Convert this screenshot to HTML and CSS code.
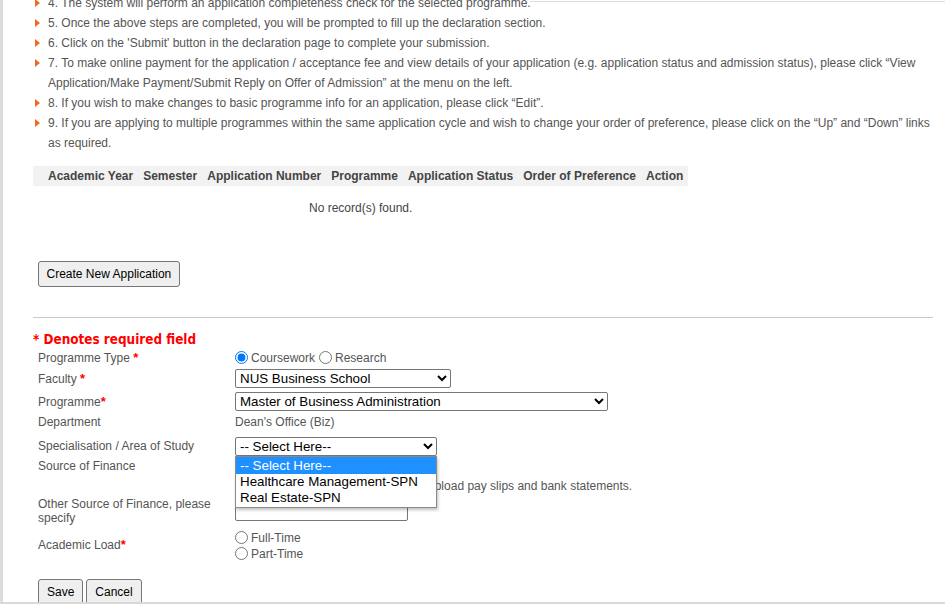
FILE: index.html
```html
<!DOCTYPE html>
<html lang="en">
<head>
<meta charset="utf-8">
<title>Application</title>
<link rel="stylesheet" href="styles.css">
</head>
<body>
<div class="frame">
  <div class="content">
    <ul class="steps">
      <li>4. The system will perform an application completeness check for the selected programme.</li>
      <li>5. Once the above steps are completed, you will be prompted to fill up the declaration section.</li>
      <li>6. Click on the 'Submit' button in the declaration page to complete your submission.</li>
      <li>7. To make online payment for the application / acceptance fee and view details of your application (e.g. application status and admission status), please click “View Application/Make Payment/Submit Reply on Offer of Admission” at the menu on the left.</li>
      <li>8. If you wish to make changes to basic programme info for an application, please click “Edit”.</li>
      <li>9. If you are applying to multiple programmes within the same application cycle and wish to change your order of preference, please click on the “Up” and “Down” links as required.</li>
    </ul>

    <table class="records">
      <thead>
        <tr>
          <th>Academic Year</th>
          <th>Semester</th>
          <th>Application Number</th>
          <th>Programme</th>
          <th>Application Status</th>
          <th>Order of Preference</th>
          <th>Action</th>
        </tr>
      </thead>
      <tbody>
        <tr><td colspan="7">No record(s) found.</td></tr>
      </tbody>
    </table>

    <div class="create-row">
      <button class="btn btn-create" type="button">Create New Application</button>
    </div>

    <div class="divider"></div>

    <div class="req-note">* Denotes required field</div>

    <form class="app-form">
      <div class="row r-type">
        <div class="lbl">Programme Type <span class="req">*</span></div>
        <div class="val"><input type="radio" name="ptype" class="rd" checked><span>Coursework</span><input type="radio" name="ptype" class="rd rd2"><span>Research</span></div>
      </div>
      <div class="row r-fac">
        <div class="lbl">Faculty <span class="req">*</span></div>
        <div class="val"><select class="sel w-fac"><option>NUS Business School</option></select></div>
      </div>
      <div class="row r-prog">
        <div class="lbl">Programme<span class="req">*</span></div>
        <div class="val"><select class="sel w-prog"><option>Master of Business Administration</option></select></div>
      </div>
      <div class="row r-dept">
        <div class="lbl">Department</div>
        <div class="val">Dean's Office (Biz)</div>
      </div>
      <div class="row r-spec">
        <div class="lbl">Specialisation / Area of Study</div>
        <div class="val">
          <div class="spec-wrap">
            <select class="sel w-spec"><option>-- Select Here--</option></select>
            <div class="listbox">
              <div class="opt hl">-- Select Here--</div>
              <div class="opt">Healthcare Management-SPN</div>
              <div class="opt">Real Estate-SPN</div>
            </div>
          </div>
        </div>
      </div>
      <div class="row r-fin">
        <div class="lbl lbl-top">Source of Finance</div>
        <div class="val">
          <div class="fin-line"><select class="sel w-fin"><option>-- Select Here--</option></select></div>
          <div class="fin-note">Please upload pay slips and bank statements.</div>
        </div>
      </div>
      <div class="row r-other">
        <div class="lbl lbl-wrap">Other Source of Finance, please specify</div>
        <div class="val"><input type="text" class="txt"></div>
      </div>
      <div class="row r-load">
        <div class="lbl">Academic Load<span class="req">*</span></div>
        <div class="val">
          <div class="radio-line"><input type="radio" name="load" class="rd"><span>Full-Time</span></div>
          <div class="radio-line"><input type="radio" name="load" class="rd"><span>Part-Time</span></div>
        </div>
      </div>
      <div class="actions">
        <button class="btn btn-sm" type="button">Save</button>
        <button class="btn btn-sm" type="button">Cancel</button>
      </div>
    </form>
  </div>
</div>
</body>
</html>
```

FILE: styles.css
```css
html, body {
  margin: 0;
  padding: 0;
  background: #fff;
}

body {
  font: 12px "Liberation Sans", Arial, sans-serif;
  color: #555;
}

.frame {
  position: relative;
  height: 602px;
  border-left: 3px solid #dcdcdc;
  border-bottom: 2px solid #d9d9d9;
  overflow: hidden;
}

.frame::before {
  content: "";
  position: absolute;
  top: 1px;
  left: 527px;
  right: 0;
  height: 1px;
  background: #dedede;
  z-index: 2;
}

.content {
  margin: -7px 0 0 30px;
  width: 900px;
}

/* instructions */
.steps {
  list-style: none;
  margin: 0;
  padding: 0;
  line-height: 20px;
}

.steps li {
  position: relative;
  padding-left: 15px;
}

.steps li::before {
  content: "";
  position: absolute;
  left: 2px;
  top: 6px;
  border-left: 5px solid #ef6a1e;
  border-top: 4px solid transparent;
  border-bottom: 4px solid transparent;
}

/* records table */
.records {
  border-collapse: collapse;
  margin-top: 13px;
}

.records th {
  background: #f2f2f2;
  color: #444;
  font-weight: bold;
  text-align: left;
  white-space: nowrap;
  padding: 0 5px;
  height: 20px;
  line-height: 20px;
}

.records th:first-child {
  padding-left: 15px;
}

.records td {
  text-align: center;
  color: #444;
  padding: 12px 0 0;
  line-height: 20px;
}

/* buttons */
.btn {
  font: 12px "Liberation Sans", Arial, sans-serif;
  color: #000;
  background: #efefef;
  border: 1px solid #767676;
  border-radius: 3px;
  padding: 0 8px;
  height: 26px;
  margin: 0;
}

.btn-create {
  padding: 0 7.5px;
}

.create-row {
  margin-top: 43px;
  padding-left: 5px;
}

.divider {
  margin-top: 30px;
  border-top: 1px solid #c9c9c9;
}

.req-note {
  margin-top: 14px;
  height: 16px;
  line-height: 16px;
  color: #f00;
  font: bold 13.4px "DejaVu Sans Condensed", "DejaVu Sans", sans-serif;
}

/* form */
.app-form {
  padding-left: 5px;
}

.row {
  display: flex;
  align-items: center;
}

.lbl {
  width: 197px;
  flex: none;
  color: #555;
}

.val {
  color: #555;
}

.req {
  color: #f00;
  font-size: 13px;
  font-weight: bold;
}

.r-type { height: 19px; }
.r-fac { height: 23px; }
.r-prog { height: 22px; }
.r-dept { height: 19px; }
.r-spec { height: 30px; }
.r-fin { height: 35px; align-items: flex-start; }
.r-other { height: 30px; }
.r-load { height: 36px; }

.lbl-top {
  line-height: 14px;
  margin-top: -2px;
}

.lbl-wrap {
  line-height: 14px;
}

.rd {
  width: 13px;
  height: 13px;
  margin: 0 3px 0 0;
  vertical-align: -2px;
}

.rd2 {
  margin-left: 4px;
}

.sel {
  font: 13.33px "Liberation Sans", Arial, sans-serif;
  color: #000;
  height: 19px;
  border: 1px solid #767676;
  border-radius: 2px;
  background: #fff;
  box-sizing: border-box;
  margin: 0;
}

.w-fac { width: 216px; }
.w-prog { width: 373px; }
.w-spec { width: 202px; }
.w-fin { width: 180px; height: 17px; }

.spec-wrap {
  position: relative;
  display: flex;
}

.listbox {
  position: absolute;
  left: 0;
  top: 100%;
  width: 202px;
  box-sizing: border-box;
  border: 1px solid #8a8a8a;
  background: #fff;
  box-shadow: 1px 2px 3px rgba(0, 0, 0, 0.25);
  font: 13.33px "Liberation Sans", Arial, sans-serif;
  color: #000;
  padding-bottom: 1px;
  z-index: 5;
}

.opt {
  line-height: 16px;
  padding-left: 4px;
  white-space: nowrap;
}

.opt.hl {
  background: #1e90ff;
  color: #fff;
  line-height: 17px;
}

.fin-line {
  height: 17px;
}

.fin-note {
  line-height: 16px;
  padding-left: 153px;
  white-space: nowrap;
}

.txt {
  width: 173px;
  height: 20px;
  box-sizing: border-box;
  border: 1px solid #767676;
  border-radius: 2px;
  margin: 0;
  padding: 0 2px;
  font: 13.33px "Liberation Sans", Arial, sans-serif;
}

.r-load .val {
  padding-top: 3px;
}

.radio-line {
  line-height: 16px;
  white-space: nowrap;
}

.actions {
  margin-top: 17px;
  display: flex;
  gap: 3px;
}

.btn-sm {
  padding: 0 8px;
}
```
